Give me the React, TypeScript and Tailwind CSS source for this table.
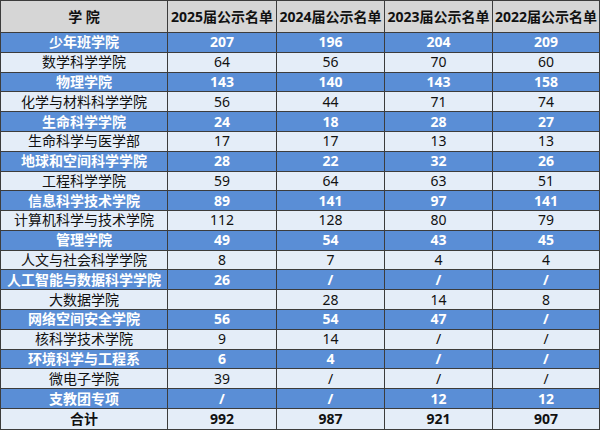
import React from 'react';

type Row = { name: string; vals: string[] };

const rows: Row[] = [
  { name: '少年班学院', vals: ['207', '196', '204', '209'] },
  { name: '数学科学学院', vals: ['64', '56', '70', '60'] },
  { name: '物理学院', vals: ['143', '140', '143', '158'] },
  { name: '化学与材料科学学院', vals: ['56', '44', '71', '74'] },
  { name: '生命科学学院', vals: ['24', '18', '28', '27'] },
  { name: '生命科学与医学部', vals: ['17', '17', '13', '13'] },
  { name: '地球和空间科学学院', vals: ['28', '22', '32', '26'] },
  { name: '工程科学学院', vals: ['59', '64', '63', '51'] },
  { name: '信息科学技术学院', vals: ['89', '141', '97', '141'] },
  { name: '计算机科学与技术学院', vals: ['112', '128', '80', '79'] },
  { name: '管理学院', vals: ['49', '54', '43', '45'] },
  { name: '人文与社会科学学院', vals: ['8', '7', '4', '4'] },
  { name: '人工智能与数据科学学院', vals: ['26', '/', '/', '/'] },
  { name: '大数据学院', vals: ['', '28', '14', '8'] },
  { name: '网络空间安全学院', vals: ['56', '54', '47', '/'] },
  { name: '核科学技术学院', vals: ['9', '14', '/', '/'] },
  { name: '环境科学与工程系', vals: ['6', '4', '/', '/'] },
  { name: '微电子学院', vals: ['39', '/', '/', '/'] },
  { name: '支教团专项', vals: ['/', '/', '12', '12'] },
];

const headers = ['2025届公示名单', '2024届公示名单', '2023届公示名单', '2022届公示名单'];

const Cell = ({ children, className }: { children?: React.ReactNode; className: string }) => (
  <div className={`flex items-center justify-center whitespace-nowrap ${className}`}>{children}</div>
);

export default function App() {
  return (
    <div
      className="w-[600px] h-[430px] overflow-hidden bg-[#3c3c3c] p-px grid gap-px grid-cols-[166px_108px_107px_107px_106px] grid-rows-[31px_repeat(19,minmax(0,1fr))_20px] text-[14px] leading-none"
      style={{ fontFamily: '"Noto Sans", "Noto Sans CJK SC", sans-serif' }}
    >
      <Cell className="bg-[#d6d6d6] text-[#111] font-bold">学 院</Cell>
      {headers.map((h) => (
        <Cell key={h} className="bg-[#d6d6d6] text-[#111] font-bold">
          {h}
        </Cell>
      ))}
      {rows.map((r, i) => {
        const cls = i % 2 === 0 ? 'bg-[#5a8ed6] text-white font-bold' : 'bg-[#e4edf8] text-[#111]';
        return (
          <React.Fragment key={r.name}>
            <Cell className={cls}>{r.name}</Cell>
            {r.vals.map((v, j) => (
              <Cell key={j} className={cls}>
                {v}
              </Cell>
            ))}
          </React.Fragment>
        );
      })}
      <Cell className="bg-[#e4edf8] text-[#111] font-bold">合计</Cell>
      {['992', '987', '921', '907'].map((v) => (
        <Cell key={v} className="bg-[#e4edf8] text-[#111] font-bold">
          {v}
        </Cell>
      ))}
    </div>
  );
}
